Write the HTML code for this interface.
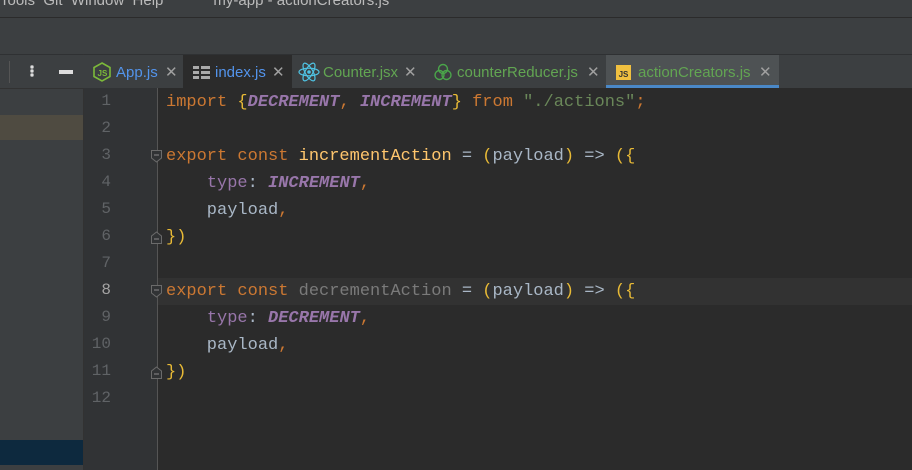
<!DOCTYPE html>
<html><head><meta charset="utf-8"><style>
*{margin:0;padding:0;box-sizing:border-box}
body{width:912px;height:470px;overflow:hidden;background:#3c3f41;position:relative;font-family:"Liberation Sans",sans-serif}
.abs{position:absolute}
.menu{left:0;top:-8px;height:25px;color:#bbbbbb;font-size:15px;white-space:pre}
.tabs{left:83px;top:55px;right:0;height:33px;background:#3c3f41}
.tab{position:absolute;top:0;height:33px;font-size:15px;line-height:36px;color:#5394ec}
.x{color:#a0a0a0;font-size:15px;position:absolute;top:0}
.code{font-family:"Liberation Mono","DejaVu Sans Mono",monospace;font-size:17px;color:#a9b7c6;white-space:pre}
.ln{position:absolute;left:83px;width:28px;text-align:right;color:#606366;font-family:"Liberation Mono",monospace;font-size:16px}
.k{color:#cc7832}.c{color:#9876aa;font-style:italic;font-weight:bold}.s{color:#6a8759}.y{color:#e8ba36}.f{color:#ffc66d}.g{color:#7a7a7a}.p{color:#9876aa}
</style></head><body>
<div class="abs menu">Tools  Git  Window  Help            my-app - actionCreators.js</div>
<div class="abs" style="left:0;top:17px;width:912px;height:1px;background:#2b2b2b"></div>
<div class="abs" style="left:0;top:54px;width:912px;height:1px;background:#2f3133"></div>
<div class="abs" style="left:0;top:88px;width:83px;height:382px;background:#3c3f41"></div>
<div class="abs" style="left:0;top:115px;width:83px;height:25px;background:#4f4b41"></div>
<div class="abs" style="left:0;top:440px;width:83px;height:25px;background:#0d293e"></div>
<div class="abs" style="left:0;top:88px;width:83px;height:1px;background:#323232"></div>
<div class="abs" style="left:9px;top:61px;width:1px;height:22px;background:#555"></div>
<div class="abs" style="left:30px;top:65px;width:4px;height:4px;background:#ddd;border-radius:1px;box-shadow:0 5px 0 #ddd,0 10px 0 #ddd;transform:scale(.8)"></div>
<div class="abs" style="left:59px;top:70px;width:14px;height:4px;background:#ddd"></div>
<div class="abs" style="left:83px;top:54px;width:1px;height:416px;background:#323232"></div>
<div class="abs tabs">
 <div class="tab" style="left:0;width:100px;">
  <svg class="abs" style="left:10px;top:7px" width="18" height="20" viewBox="0 0 18 20"><path d="M9 1L17 5.5V14.5L9 19L1 14.5V5.5Z" fill="none" stroke="#7cb93a" stroke-width="1.6"/><text x="4.5" y="14" font-size="8" font-family="Liberation Sans" fill="#7cb93a" font-weight="bold">JS</text></svg>
  <span class="abs" style="left:33px">App.js</span><span class="x" style="left:82px;line-height:36px">✕</span></div>
 <div class="tab" style="left:100px;width:109px;background:#2b2b2b">
  <div class="abs" style="left:10px;top:11px;width:6px;height:3px;background:#aaa;box-shadow:0 5px 0 #aaa,0 10px 0 #aaa"></div>
  <div class="abs" style="left:18px;top:11px;width:9px;height:3px;background:#aaa;box-shadow:0 5px 0 #aaa,0 10px 0 #aaa"></div>
  <span class="abs" style="left:32px">index.js</span><span class="x" style="left:89px;line-height:36px">✕</span></div>
 <div class="tab" style="left:209px;width:133px;color:#62a552">
  <svg class="abs" style="left:6px;top:7px" width="22" height="20" viewBox="0 0 22 20"><g fill="none" stroke="#4fc4e4" stroke-width="1.2"><ellipse cx="11" cy="10" rx="10" ry="3.8"/><ellipse cx="11" cy="10" rx="10" ry="3.8" transform="rotate(60 11 10)"/><ellipse cx="11" cy="10" rx="10" ry="3.8" transform="rotate(120 11 10)"/></g><circle cx="11" cy="10" r="1.8" fill="#4fc4e4"/></svg>
  <span class="abs" style="left:31px">Counter.jsx</span><span class="x" style="left:112px;line-height:36px">✕</span></div>
 <div class="tab" style="left:342px;width:181px;color:#62a552">
  <svg class="abs" style="left:9px;top:8px" width="18" height="18" viewBox="0 0 18 18"><g fill="none" stroke="#4aa54a" stroke-width="1.4"><circle cx="9" cy="6" r="4.5"/><circle cx="5.5" cy="12" r="4.5"/><circle cx="12.5" cy="12" r="4.5"/></g></svg>
  <span class="abs" style="left:32px">counterReducer.js</span><span class="x" style="left:162px;line-height:36px">✕</span></div>
 <div class="tab" style="left:523px;width:173px;background:#4e5254;color:#62a552">
  <div class="abs" style="left:10px;top:10px;width:15px;height:15px;background:#f0c040;color:#333;font-size:8px;line-height:19px;text-align:center;font-weight:bold">JS</div>
  <span class="abs" style="left:32px">actionCreators.js</span><span class="x" style="left:153px;line-height:36px">✕</span>
  <div class="abs" style="left:0;bottom:0;width:173px;height:3px;background:#4a88c7"></div></div>
</div>
<div class="abs" style="left:84px;top:88px;width:828px;height:382px;background:#2b2b2b"></div>
<div class="abs" style="left:84px;top:88px;width:73px;height:382px;background:#313335"></div>
<div class="abs" style="left:157px;top:88px;width:1px;height:382px;background:#555"></div>
<div class="abs" style="left:158px;top:278px;width:754px;height:27px;background:#323232"></div>
<div class="ln" style="top:92px">1</div><div class="ln" style="top:119px">2</div><div class="ln" style="top:146px">3</div><div class="ln" style="top:173px">4</div><div class="ln" style="top:200px">5</div><div class="ln" style="top:227px">6</div><div class="ln" style="top:254px">7</div><div class="ln" style="top:281px;color:#a4a3a3">8</div><div class="ln" style="top:308px">9</div><div class="ln" style="top:335px">10</div><div class="ln" style="top:362px">11</div><div class="ln" style="top:389px">12</div>
<svg class="abs" style="left:150px;top:149px" width="14" height="240" viewBox="0 0 14 240"><g fill="#313335" stroke="#6b6b6b" stroke-width="1"><path d="M1.5 1.5H11.5V9L6.5 13L1.5 9Z"/><path d="M1.5 94.5V87L6.5 83L11.5 87V94.5Z"/><path d="M1.5 136.5H11.5V144L6.5 148L1.5 144Z"/><path d="M1.5 229.5V222L6.5 218L11.5 222V229.5Z"/></g><g stroke="#8a8a8a"><path d="M4 6H9M4 90H9M4 141H9M4 225H9"/></g></svg>
<div class="abs code" style="left:166px;top:89px;line-height:27px"><span class="k">import</span> <span class="y">{</span><span class="c">DECREMENT</span><span class="k">,</span> <span class="c">INCREMENT</span><span class="y">}</span> <span class="k">from</span> <span class="s">"./actions"</span><span class="k">;</span>

<span class="k">export const</span> <span class="f">incrementAction</span> = <span class="y">(</span>payload<span class="y">)</span> => <span class="y">({</span>
    <span class="p">type</span>: <span class="c">INCREMENT</span><span class="k">,</span>
    payload<span class="k">,</span>
<span class="y">})</span>

<span class="k">export const</span> <span class="g">decrementAction</span> = <span class="y">(</span>payload<span class="y">)</span> => <span class="y">({</span>
    <span class="p">type</span>: <span class="c">DECREMENT</span><span class="k">,</span>
    payload<span class="k">,</span>
<span class="y">})</span></div>
</body></html>
